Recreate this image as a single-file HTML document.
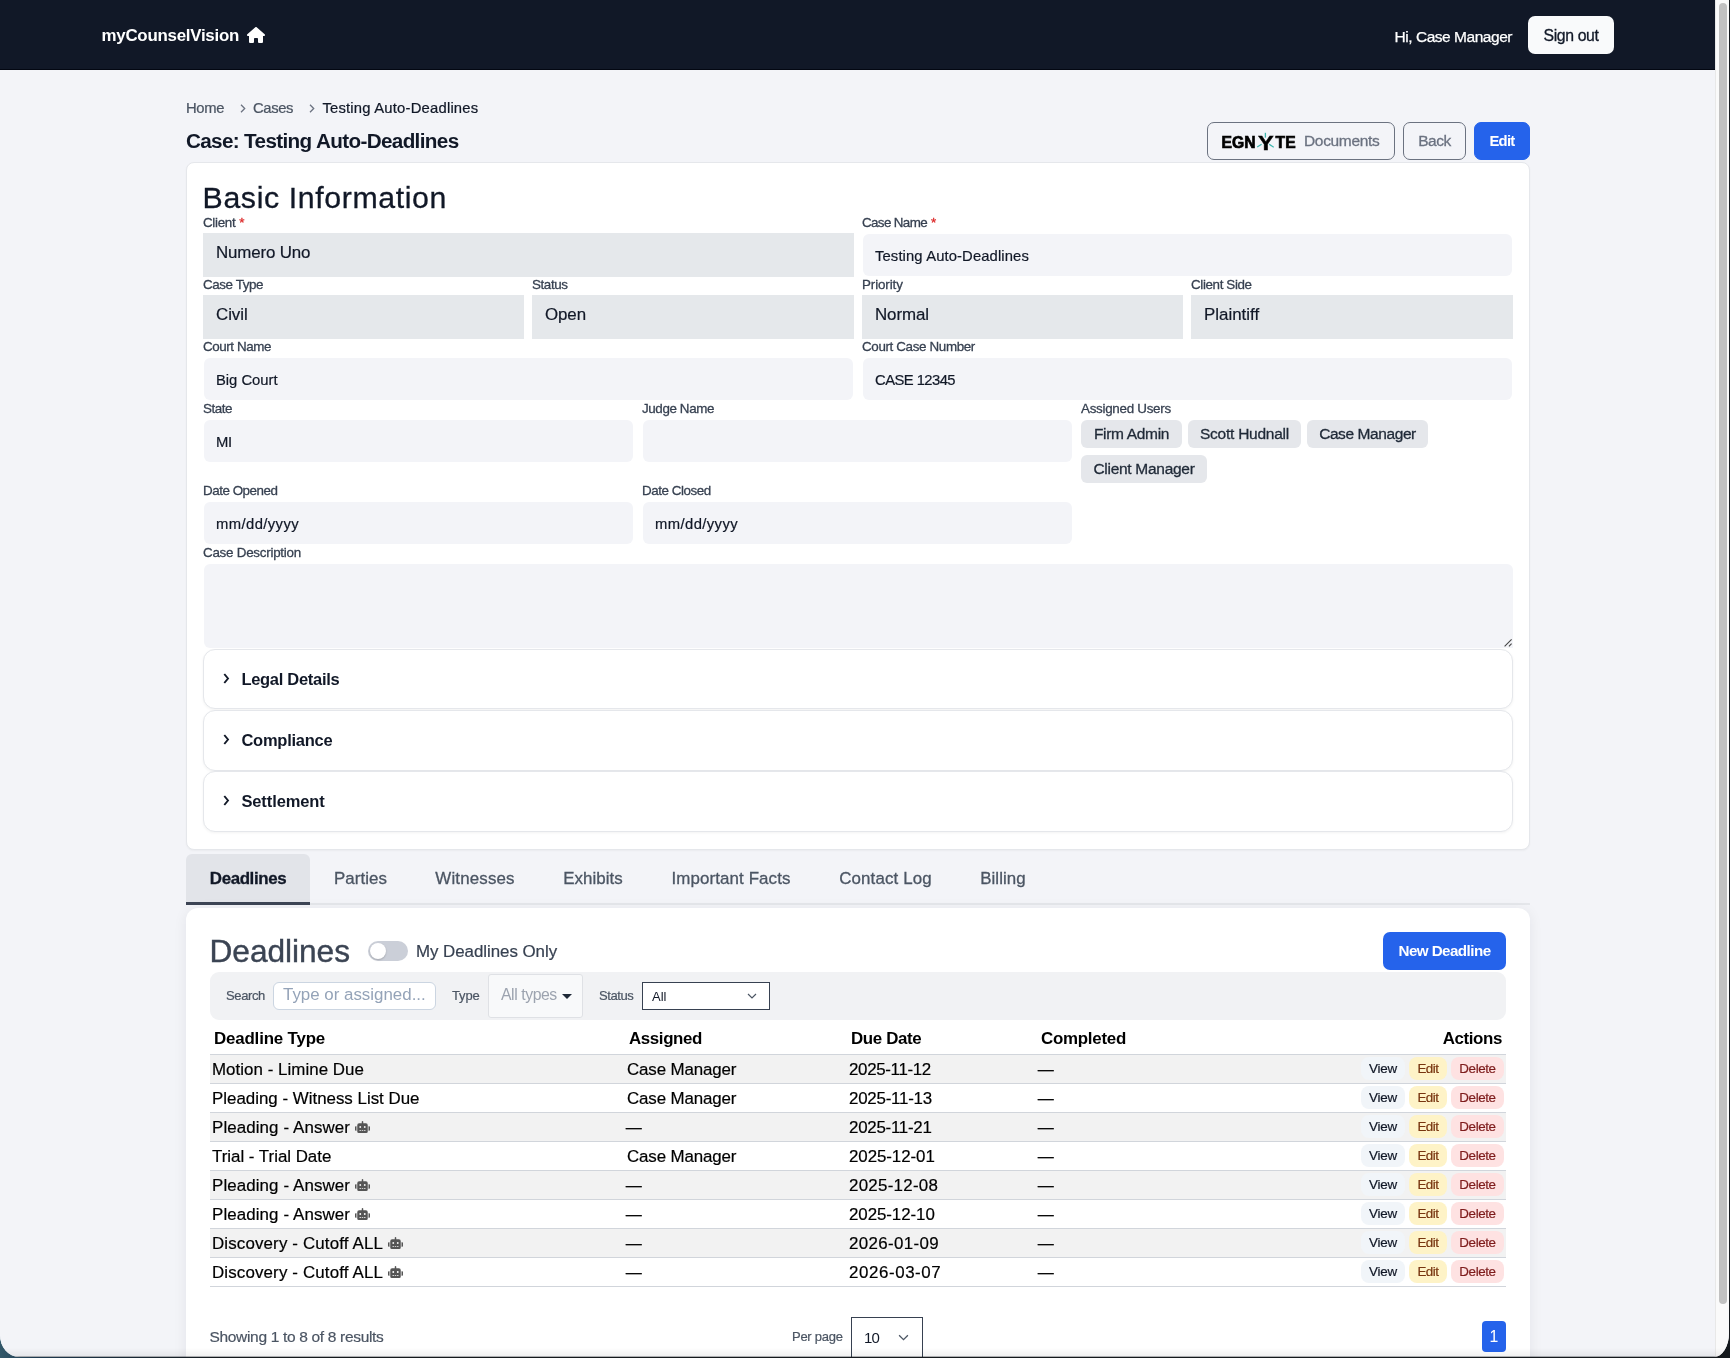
<!DOCTYPE html>
<html lang="en">
<head>
<meta charset="utf-8">
<title>Case: Testing Auto-Deadlines</title>
<style>
*{box-sizing:border-box;margin:0;padding:0}
html,body{width:1730px;height:1358px;overflow:hidden;background:#15191d}
body{background:linear-gradient(to right,#33586a 0,#1f3a50 35px,#15191d 220px)}
body{font-family:"Liberation Sans",Arial,sans-serif;color:#111827}
#win{will-change:transform;position:absolute;left:0;top:0;width:1729px;height:1357px;overflow:hidden;background:#f3f4f8;border-radius:0 0 15px 19px/0 0 24px 22px}
#page{position:absolute;left:0;top:0;width:1715px;height:1357px;overflow:hidden;background:#f3f4f8}
.abs{position:absolute;white-space:nowrap}
#win:after{content:"";position:absolute;left:0;bottom:0;width:100%;height:9px;background:linear-gradient(to bottom,rgba(0,0,0,0),rgba(0,0,0,.05) 85%,rgba(20,25,30,.35) 89%,rgba(20,25,30,.35))}
.md{-webkit-text-stroke:.3px currentColor}
/* scrollbar */
#sb{position:absolute;left:1715px;top:0;width:15px;height:1357px;background:#fafafa;border-left:1px solid #e8e8e8}
#sb i{position:absolute;left:3px;top:3px;width:8px;height:1301px;border-radius:4px;background:#c1c1c1}
/* header */
#hdr{position:absolute;left:0;top:0;width:1715px;height:70px;background:#111827;border-bottom:1px solid #030712}
#brand{left:101.5px;top:26px;letter-spacing:.23px;font-size:16.900px;font-weight:700;color:#fff;line-height:20px}
#homeic{position:absolute;left:247px;top:27px;width:18px;height:16px}
#hi{-webkit-text-stroke:.25px currentColor;left:1394.5px;top:26.5px;font-size:15.500px;letter-spacing:-.2px;color:#fff;line-height:20px}
#signout{-webkit-text-stroke:.3px currentColor;left:1528px;top:16px;width:86px;height:38px;background:#f9fafb;border-radius:7px;color:#111827;font-size:15.800px;line-height:39px;text-align:center}
/* breadcrumb + title */
#crumbs{-webkit-text-stroke:.22px currentColor;left:186px;top:98px;height:20px;font-size:14.800px;line-height:20px;color:#4b5563}
#crumbs span,#crumbs svg{position:absolute;top:0}
#crumbs svg{top:6px;width:6px;height:9px}
#title{left:185.900px;top:127.500px;font-size:20.700px;font-weight:700;letter-spacing:-.42px;line-height:26px;color:#111827}
.btn{position:absolute;-webkit-text-stroke:.3px currentColor;top:122px;height:38px;border-radius:7px;font-size:15.500px;line-height:36px;text-align:center;border:1px solid #6b7280;color:#6b7280;white-space:nowrap}
#egn{left:1207px;width:188px}
#back{left:1403px;width:63px;letter-spacing:-.2px}
#edit{-webkit-text-stroke:0;left:1474px;width:56px;background:#2563eb;border-color:#2563eb;color:#fff;font-weight:700;font-size:14.800px;letter-spacing:-.25px}
/* card */
#card{position:absolute;left:186px;top:162px;width:1344px;height:688px;background:#fff;border:1px solid #e5e7eb;border-radius:8px;box-shadow:0 1px 2px rgba(0,0,0,.04)}
#card h2{-webkit-text-stroke:.3px currentColor;position:absolute;left:15.600px;top:16.500px;letter-spacing:.88px;font-size:30.300px;font-weight:400;line-height:36px;color:#111827;white-space:nowrap}
.lbl{position:absolute;-webkit-text-stroke:.28px currentColor;letter-spacing:-.15px;font-size:13.400px;line-height:16px;color:#374151;white-space:nowrap;height:16px}
.lbl b{color:#dc2626;font-weight:400;margin-left:4px}
.sel{-webkit-text-stroke:.2px currentColor;position:absolute;height:44px;background:#e5e8eb;font-size:16.900px;line-height:40px;letter-spacing:.35px;padding-left:13px;color:#111827;white-space:nowrap}
.inp{-webkit-text-stroke:.2px currentColor;position:absolute;height:42px;background:#f3f4f8;border-radius:6px;font-size:14.800px;line-height:44px;padding-left:12px;color:#111827;white-space:nowrap}
.chip{position:absolute;-webkit-text-stroke:.3px currentColor;height:28px;background:#e5e7eb;border-radius:6px;font-size:15.500px;line-height:28px;text-align:center;color:#1f2937;white-space:nowrap}
.acc{position:absolute;left:16px;width:1310px;height:60px;background:#fff;border:1px solid #e5e7eb;border-radius:12px;box-shadow:0 1px 3px rgba(0,0,0,.05)}
.acc svg{position:absolute;left:19.300px;top:23px;width:7px;height:11px}
.acc span{position:absolute;left:37.400px;top:19px;font-size:16.500px;font-weight:700;line-height:20px;color:#111827;white-space:nowrap}

/* tabs */
#tabs{position:absolute;left:186px;top:854px;width:1344px;height:51px;border-bottom:2px solid #e5e7eb}
#tabs a{position:absolute;-webkit-text-stroke:.3px currentColor;top:0;height:51px;letter-spacing:.5px;font-size:16.900px;line-height:49px;color:#4b5563;white-space:nowrap;text-align:center}
#tabs a.on{background:#e2e4e9;border-radius:6px 6px 0 0;color:#111827;font-weight:700;letter-spacing:.08px;border-bottom:3px solid #3d4555}
/* panel */
#panel{position:absolute;left:186px;top:908px;width:1344px;height:460px;background:#fff;border-radius:12px 12px 0 0;box-shadow:0 2px 14px rgba(15,23,42,.07)}
#panel h2{position:absolute;left:23.500px;top:25px;letter-spacing:.79px;font-size:31.700px;font-weight:400;line-height:36px;color:#3b4453;white-space:nowrap;-webkit-text-stroke:.4px #3b4453}
#tog{position:absolute;left:182px;top:33px;width:40px;height:20px;border-radius:10px;background:#cbcfd8}
#tog i{position:absolute;left:2px;top:2px;width:16px;height:16px;border-radius:8px;background:#fff;box-shadow:0 1px 2px rgba(0,0,0,.2)}
#mydl{-webkit-text-stroke:.2px currentColor;left:230px;top:33px;letter-spacing:.4px;font-size:16.900px;line-height:22px;color:#374151}
#newdl{left:1197px;top:24px;width:123px;height:38px;border-radius:7px;background:#2563eb;color:#fff;font-size:15.200px;letter-spacing:-.18px;font-weight:700;line-height:38px;text-align:center}
#fbar{position:absolute;left:24px;top:64px;width:1296px;height:48px;background:#f1f2f4;border-radius:9px}
#fbar .fl{-webkit-text-stroke:.2px currentColor;position:absolute;top:16px;font-size:13px;line-height:16px;color:#4b5563;white-space:nowrap}
#srch{position:absolute;left:63px;top:10px;width:163px;height:28px;background:#fff;border:1px solid #cbd5e1;border-radius:6px;font-size:16.900px;letter-spacing:.4px;line-height:24px;padding-left:9px;color:#94a3b8;white-space:nowrap;overflow:hidden}
#types{position:absolute;left:278px;top:2px;width:95px;height:44px;border:1px solid #dfe1e5;border-radius:3px;background:#f8f9fa;font-size:15.800px;line-height:40px;padding-left:12px;color:#9ca3af;white-space:nowrap}
#types i{position:absolute;left:72.500px;top:19px;border:5px solid transparent;border-top:5px solid #1f2937;border-bottom:0;width:0;height:0}
#stat{position:absolute;left:432px;top:10px;width:128px;height:28px;background:#fff;border:1px solid #374151;font-size:13px;line-height:27px;padding-left:9px;color:#111827;white-space:nowrap}
#stat svg,#pp svg{position:absolute}
table#dl{position:absolute;left:24px;top:116px;width:1296px;border-collapse:collapse;table-layout:fixed;font-size:16.900px;color:#000}
#dl th{height:30px;text-align:left;font-weight:700;letter-spacing:.2px;padding:1px 0 0 4px;border-bottom:1px solid #d1d5db;white-space:nowrap;vertical-align:middle}
#dl td{-webkit-text-stroke:.2px currentColor;height:29px;letter-spacing:.36px;padding:1px 0 0 2px;box-sizing:border-box;border-bottom:1px solid #d1d5db;white-space:nowrap;vertical-align:middle;line-height:27px}
#dl td.em{font-size:16px;padding-left:.8px;letter-spacing:0}
#dl tbody tr:nth-child(odd){background:#f2f2f2}
#dl th:last-child{text-align:right;padding-right:4px}
#dl td:last-child{text-align:right;padding-right:2px;font-size:0}
#dl .a{-webkit-text-stroke:.2px currentColor;display:inline-block;height:23px;border-radius:8px;letter-spacing:-.1px;font-size:13.400px;line-height:23px;text-align:center;margin-left:4px;vertical-align:middle}
#dl .v{width:44px;background:#f1f5f9;color:#111827}
#dl .e{width:38px;background:#fef3c7;color:#78350f}
#dl .d{width:53px;background:#fee2e2;color:#7f1d1d}
#dl .bot{display:inline-block;width:15px;height:12px;margin-left:4.500px;vertical-align:0}
#show{-webkit-text-stroke:.2px currentColor;left:23.500px;top:418px;letter-spacing:-.1px;font-size:15.500px;line-height:22px;color:#4b5563}
#ppl{-webkit-text-stroke:.2px currentColor;left:606px;top:421px;font-size:13px;line-height:16px;color:#4b5563}
#pp{position:absolute;left:665px;top:409px;width:72px;height:42px;background:#fff;border:1px solid #374151;font-size:15px;line-height:40px;padding-left:12px;color:#111827}
#pg1{left:1296px;top:413px;width:24px;height:31px;border-radius:4px;background:#2563eb;color:#fff;font-size:15.800px;line-height:31px;text-align:center}
</style>
</head>
<body>
<div id="win">
<div id="page">
  <header id="hdr">
    <div id="brand" class="abs" style="letter-spacing:-0.26px">myCounselVision</div>
    <svg id="homeic" viewBox="0 0 576 512"><path fill="#fff" d="M575.8 255.5c0 18-15 32.1-32 32.1h-32l.7 160.2c0 2.700-.2 5.400-.5 8.100V472c0 22.100-17.900 40-40 40H456c-1.100 0-2.200 0-3.300-.1c-1.400.1-2.800.1-4.200.1H416 392c-22.100 0-40-17.900-40-40V448 384c0-17.700-14.300-32-32-32H256c-17.700 0-32 14.300-32 32v64 24c0 22.100-17.900 40-40 40H160 128.100c-1.500 0-3-.1-4.500-.2c-1.200.1-2.400.2-3.600.2H104c-22.100 0-40-17.900-40-40V360c0-.9 0-1.900.1-2.800V287.600H32c-18 0-32-14-32-32.100c0-9 3-17 10-24L266.400 8c7-7 15-8 22-8s15 2 21 7L564.800 231.500c8 7 12 15 11 24z"/></svg>
    <div id="hi" class="abs" style="letter-spacing:-0.46px">Hi, Case Manager</div>
    <div id="signout" class="abs" style="letter-spacing:-0.37px">Sign out</div>
  </header>

  <nav id="crumbs" class="abs">
    <span style="letter-spacing:-0.37px;left:0">Home</span>
    <svg style="left:54px" viewBox="0 0 6 9"><path d="M1 .8 4.7 4.5 1 8.200" fill="none" stroke="#6b7280" stroke-width="1.300"/></svg>
    <span style="letter-spacing:-0.39px;left:67px">Cases</span>
    <svg style="left:123px" viewBox="0 0 6 9"><path d="M1 .8 4.7 4.5 1 8.200" fill="none" stroke="#6b7280" stroke-width="1.300"/></svg>
    <span style="left:136.400px;color:#111827;letter-spacing:0.21px">Testing Auto-Deadlines</span>
  </nav>
  <h1 id="title" class="abs" style="letter-spacing:-0.65px">Case: Testing Auto-Deadlines</h1>

  <div id="egn" class="btn">
    <svg style="position:absolute;left:12px;top:8px" width="80" height="22" viewBox="0 0 80 22">
      <g font-family="Liberation Sans, Arial, sans-serif" font-weight="700" font-size="16.200" fill="#000" stroke="#000" stroke-width=".7">
        <text x="1.600" y="16.900" textLength="34" lengthAdjust="spacingAndGlyphs">EGN</text>
        <text x="55.600" y="16.900" textLength="20" lengthAdjust="spacingAndGlyphs">TE</text>
        <text transform="translate(37.900 18.650) scale(1.450 1.220)" x="0" y="0" stroke-width=".38">Y</text>
      </g>
      <g stroke="#3fb5ae" stroke-width="1.300" stroke-linecap="butt">
        <line x1="45.400" y1="1.800" x2="45.400" y2="6.600"/>
        <line x1="41.600" y1="13.300" x2="37.200" y2="16"/>
        <line x1="49.200" y1="13.300" x2="53.700" y2="16.200"/>
      </g>
    </svg>
    <span style="letter-spacing:-0.33px;position:absolute;left:96px;top:0">Documents</span>
  </div>
  <div id="back" class="btn" style="letter-spacing:-0.52px">Back</div>
  <div id="edit" class="btn" style="letter-spacing:-0.69px">Edit</div>

  <section id="card">
    <h2 style="letter-spacing:0.61px">Basic Information</h2>
    <!-- row 1 : T=215 abs => rel 52 -->
    <div class="lbl" style="letter-spacing:-0.32px;left:16px;top:52px">Client<b>*</b></div>
    <div class="sel" style="letter-spacing:-0.14px;left:16px;top:70px;width:651px;line-height:40px">Numero Uno</div>
    <div class="lbl" style="left:675px;top:52px;letter-spacing:-0.63px">Case Name<b>*</b></div>
    <div class="inp" style="left:676px;top:71px;width:649px;letter-spacing:0.12px">Testing Auto-Deadlines</div>
    <!-- row 2 -->
    <div class="lbl" style="letter-spacing:-0.42px;left:16px;top:114px">Case Type</div>
    <div class="sel" style="letter-spacing:-0.06px;left:16px;top:132px;width:321px">Civil</div>
    <div class="lbl" style="letter-spacing:-0.4px;left:345px;top:114px">Status</div>
    <div class="sel" style="letter-spacing:-0.08px;left:345px;top:132px;width:322px">Open</div>
    <div class="lbl" style="letter-spacing:-0.12px;left:675px;top:114px">Priority</div>
    <div class="sel" style="letter-spacing:-0.09px;left:675px;top:132px;width:321px">Normal</div>
    <div class="lbl" style="letter-spacing:-0.37px;left:1004px;top:114px">Client Side</div>
    <div class="sel" style="letter-spacing:0.01px;left:1004px;top:132px;width:322px">Plaintiff</div>
    <!-- row 3 -->
    <div class="lbl" style="letter-spacing:-0.42px;left:16px;top:176px">Court Name</div>
    <div class="inp" style="left:17px;top:195px;width:649px;letter-spacing:-0.02px">Big Court</div>
    <div class="lbl" style="letter-spacing:-0.36px;left:675px;top:176px">Court Case Number</div>
    <div class="inp" style="letter-spacing:-0.55px;left:676px;top:195px;width:649px">CASE 12345</div>
    <!-- row 4 -->
    <div class="lbl" style="letter-spacing:-0.43px;left:16px;top:238px">State</div>
    <div class="inp" style="letter-spacing:-0.37px;left:17px;top:257px;width:429px">MI</div>
    <div class="lbl" style="letter-spacing:-0.39px;left:455px;top:238px">Judge Name</div>
    <div class="inp" style="left:456px;top:257px;width:429px"></div>
    <div class="lbl" style="letter-spacing:-0.28px;left:894px;top:238px">Assigned Users</div>
    <div class="chip" style="letter-spacing:-0.32px;left:894px;top:257px;width:101px">Firm Admin</div>
    <div class="chip" style="letter-spacing:-0.25px;left:1001px;top:257px;width:113px">Scott Hudnall</div>
    <div class="chip" style="letter-spacing:-0.41px;left:1120px;top:257px;width:121px">Case Manager</div>
    <div class="chip" style="letter-spacing:-0.29px;left:894px;top:292px;width:126px">Client Manager</div>
    <!-- row 5 -->
    <div class="lbl" style="letter-spacing:-0.47px;left:16px;top:320px">Date Opened</div>
    <div class="inp" style="left:17px;top:339px;width:429px;letter-spacing:0.41px">mm/dd/yyyy</div>
    <div class="lbl" style="letter-spacing:-0.44px;left:455px;top:320px">Date Closed</div>
    <div class="inp" style="left:456px;top:339px;width:429px;letter-spacing:0.41px">mm/dd/yyyy</div>
    <!-- description -->
    <div class="lbl" style="letter-spacing:-0.25px;left:16px;top:382px">Case Description</div>
    <div class="inp" style="left:17px;top:401px;width:1309px;height:84px;border-radius:6px 6px 0 6px">
      <svg style="position:absolute;right:1px;bottom:1px" width="8" height="8" viewBox="0 0 8 8"><path d="M7.600 .4.6 7.400M7.600 4.700 4.900 7.400" stroke="#454545" stroke-width="1.100" fill="none"/></svg>
    </div>
    <!-- accordions -->
    <div class="acc" style="top:486px"><svg viewBox="0 0 7 11"><path d="M1.300 1 5 5.500 1.300 10" fill="none" stroke="#111827" stroke-width="1.900"/></svg><span style="letter-spacing:-0.29px">Legal Details</span></div>
    <div class="acc" style="top:547px;height:61px"><svg viewBox="0 0 7 11"><path d="M1.300 1 5 5.500 1.300 10" fill="none" stroke="#111827" stroke-width="1.900"/></svg><span style="letter-spacing:-0.25px">Compliance</span></div>
    <div class="acc" style="top:608px;height:61px"><svg viewBox="0 0 7 11"><path d="M1.300 1 5 5.500 1.300 10" fill="none" stroke="#111827" stroke-width="1.900"/></svg><span style="letter-spacing:-0.1px">Settlement</span></div>
  </section>
  <nav id="tabs">
    <a class="on" style="letter-spacing:-0.38px;left:0;width:124px">Deadlines</a>
    <a style="letter-spacing:0.06px;left:124px;width:101px">Parties</a>
    <a style="letter-spacing:0.15px;left:225px;width:128px">Witnesses</a>
    <a style="letter-spacing:0.04px;left:353px;width:108px">Exhibits</a>
    <a style="letter-spacing:0.11px;left:461px;width:168px">Important Facts</a>
    <a style="letter-spacing:0.14px;left:629px;width:141px">Contact Log</a>
    <a style="letter-spacing:0.09px;left:770px;width:94px">Billing</a>
  </nav>
  <section id="panel">
    <h2 style="letter-spacing:-0.05px">Deadlines</h2>
    <div id="tog"><i></i></div>
    <div id="mydl" class="abs" style="letter-spacing:-0.04px">My Deadlines Only</div>
    <div id="newdl" class="abs" style="letter-spacing:-0.56px">New Deadline</div>
    <div id="fbar">
      <span class="fl" style="letter-spacing:-0.37px;left:16px">Search</span>
      <div id="srch" style="letter-spacing:0.0px">Type or assigned...</div>
      <span class="fl" style="letter-spacing:-0.17px;left:242px">Type</span>
      <div id="types" style="letter-spacing:-0.43px">All types<i></i></div>
      <span class="fl" style="letter-spacing:-0.41px;left:389px">Status</span>
      <div id="stat">All<svg style="left:104px;top:10px" width="10" height="6" viewBox="0 0 10 6"><path d="M1 1 5 5 9 1" fill="none" stroke="#4b5563" stroke-width="1.150"/></svg></div>
    </div>
    <table id="dl">
      <colgroup><col style="width:415px"><col style="width:222px"><col style="width:190px"><col style="width:190px"><col></colgroup>
      <thead><tr><th style="letter-spacing:-0.17px">Deadline Type</th><th style="letter-spacing:-0.38px">Assigned</th><th style="letter-spacing:-0.36px">Due Date</th><th style="letter-spacing:-0.25px">Completed</th><th style="letter-spacing:-0.38px">Actions</th></tr></thead>
      <tbody>
        <tr><td style="letter-spacing:0.04px">Motion - Limine Due</td><td style="letter-spacing:-0.12px">Case Manager</td><td style="letter-spacing:-0.32px">2025-11-12</td><td class="em">—</td><td><span class="a v" style="letter-spacing:-0.25px">View</span><span class="a e" style="letter-spacing:-0.47px">Edit</span><span class="a d" style="letter-spacing:-0.4px">Delete</span></td></tr>
        <tr><td style="letter-spacing:0.0px">Pleading - Witness List Due</td><td style="letter-spacing:-0.12px">Case Manager</td><td style="letter-spacing:-0.22px">2025-11-13</td><td class="em">—</td><td><span class="a v" style="letter-spacing:-0.25px">View</span><span class="a e" style="letter-spacing:-0.47px">Edit</span><span class="a d" style="letter-spacing:-0.4px">Delete</span></td></tr>
        <tr><td style="letter-spacing:0.11px">Pleading - Answer<svg class="bot" viewBox="0 0 640 512"><path fill="#555" d="M32 224H64V416H32A32 32 0 0 1 0 384V256A32 32 0 0 1 32 224Zm512-48V448a64 64 0 0 1-64 64H160a64 64 0 0 1-64-64V176a80 80 0 0 1 80-80H288V32a32 32 0 0 1 64 0V96H464A80 80 0 0 1 544 176ZM264 256a40 40 0 1 0-40 40A40 40 0 0 0 264 256Zm-8 128H192v32h64Zm96 0H288v32h64ZM456 256a40 40 0 1 0-40 40A40 40 0 0 0 456 256Zm-8 128H384v32h64ZM640 256V384a32 32 0 0 1-32 32H576V224h32A32 32 0 0 1 640 256Z"/></svg></td><td class="em">—</td><td style="letter-spacing:-0.25px">2025-11-21</td><td class="em">—</td><td><span class="a v" style="letter-spacing:-0.25px">View</span><span class="a e" style="letter-spacing:-0.47px">Edit</span><span class="a d" style="letter-spacing:-0.4px">Delete</span></td></tr>
        <tr><td style="letter-spacing:-0.01px">Trial - Trial Date</td><td style="letter-spacing:-0.12px">Case Manager</td><td style="letter-spacing:-0.07px">2025-12-01</td><td class="em">—</td><td><span class="a v" style="letter-spacing:-0.25px">View</span><span class="a e" style="letter-spacing:-0.47px">Edit</span><span class="a d" style="letter-spacing:-0.4px">Delete</span></td></tr>
        <tr><td style="letter-spacing:0.11px">Pleading - Answer<svg class="bot" viewBox="0 0 640 512"><path fill="#555" d="M32 224H64V416H32A32 32 0 0 1 0 384V256A32 32 0 0 1 32 224Zm512-48V448a64 64 0 0 1-64 64H160a64 64 0 0 1-64-64V176a80 80 0 0 1 80-80H288V32a32 32 0 0 1 64 0V96H464A80 80 0 0 1 544 176ZM264 256a40 40 0 1 0-40 40A40 40 0 0 0 264 256Zm-8 128H192v32h64Zm96 0H288v32h64ZM456 256a40 40 0 1 0-40 40A40 40 0 0 0 456 256Zm-8 128H384v32h64ZM640 256V384a32 32 0 0 1-32 32H576V224h32A32 32 0 0 1 640 256Z"/></svg></td><td class="em">—</td><td style="letter-spacing:0.28px">2025-12-08</td><td class="em">—</td><td><span class="a v" style="letter-spacing:-0.25px">View</span><span class="a e" style="letter-spacing:-0.47px">Edit</span><span class="a d" style="letter-spacing:-0.4px">Delete</span></td></tr>
        <tr><td style="letter-spacing:0.11px">Pleading - Answer<svg class="bot" viewBox="0 0 640 512"><path fill="#555" d="M32 224H64V416H32A32 32 0 0 1 0 384V256A32 32 0 0 1 32 224Zm512-48V448a64 64 0 0 1-64 64H160a64 64 0 0 1-64-64V176a80 80 0 0 1 80-80H288V32a32 32 0 0 1 64 0V96H464A80 80 0 0 1 544 176ZM264 256a40 40 0 1 0-40 40A40 40 0 0 0 264 256Zm-8 128H192v32h64Zm96 0H288v32h64ZM456 256a40 40 0 1 0-40 40A40 40 0 0 0 456 256Zm-8 128H384v32h64ZM640 256V384a32 32 0 0 1-32 32H576V224h32A32 32 0 0 1 640 256Z"/></svg></td><td class="em">—</td><td style="letter-spacing:-0.07px">2025-12-10</td><td class="em">—</td><td><span class="a v" style="letter-spacing:-0.25px">View</span><span class="a e" style="letter-spacing:-0.47px">Edit</span><span class="a d" style="letter-spacing:-0.4px">Delete</span></td></tr>
        <tr><td style="letter-spacing:0.15px">Discovery - Cutoff ALL<svg class="bot" viewBox="0 0 640 512"><path fill="#555" d="M32 224H64V416H32A32 32 0 0 1 0 384V256A32 32 0 0 1 32 224Zm512-48V448a64 64 0 0 1-64 64H160a64 64 0 0 1-64-64V176a80 80 0 0 1 80-80H288V32a32 32 0 0 1 64 0V96H464A80 80 0 0 1 544 176ZM264 256a40 40 0 1 0-40 40A40 40 0 0 0 264 256Zm-8 128H192v32h64Zm96 0H288v32h64ZM456 256a40 40 0 1 0-40 40A40 40 0 0 0 456 256Zm-8 128H384v32h64ZM640 256V384a32 32 0 0 1-32 32H576V224h32A32 32 0 0 1 640 256Z"/></svg></td><td class="em">—</td><td style="letter-spacing:0.37px">2026-01-09</td><td class="em">—</td><td><span class="a v" style="letter-spacing:-0.25px">View</span><span class="a e" style="letter-spacing:-0.47px">Edit</span><span class="a d" style="letter-spacing:-0.4px">Delete</span></td></tr>
        <tr><td style="letter-spacing:0.15px">Discovery - Cutoff ALL<svg class="bot" viewBox="0 0 640 512"><path fill="#555" d="M32 224H64V416H32A32 32 0 0 1 0 384V256A32 32 0 0 1 32 224Zm512-48V448a64 64 0 0 1-64 64H160a64 64 0 0 1-64-64V176a80 80 0 0 1 80-80H288V32a32 32 0 0 1 64 0V96H464A80 80 0 0 1 544 176ZM264 256a40 40 0 1 0-40 40A40 40 0 0 0 264 256Zm-8 128H192v32h64Zm96 0H288v32h64ZM456 256a40 40 0 1 0-40 40A40 40 0 0 0 456 256Zm-8 128H384v32h64ZM640 256V384a32 32 0 0 1-32 32H576V224h32A32 32 0 0 1 640 256Z"/></svg></td><td class="em">—</td><td style="letter-spacing:0.59px">2026-03-07</td><td class="em">—</td><td><span class="a v" style="letter-spacing:-0.25px">View</span><span class="a e" style="letter-spacing:-0.47px">Edit</span><span class="a d" style="letter-spacing:-0.4px">Delete</span></td></tr>
      </tbody>
    </table>
    <div id="show" class="abs" style="letter-spacing:-0.32px">Showing 1 to 8 of 8 results</div>
    <div id="ppl" class="abs" style="letter-spacing:-0.27px">Per page</div>
    <div id="pp" style="letter-spacing:-.9px">10<svg style="left:45.800px;top:15.500px" width="11" height="7" viewBox="0 0 10 6"><path d="M1 1 5 5 9 1" fill="none" stroke="#4b5563" stroke-width="1.150"/></svg></div>
    <div id="pg1" class="abs">1</div>
  </section>

</div>
<div id="sb"><i></i></div>
</div>
</body>
</html>
